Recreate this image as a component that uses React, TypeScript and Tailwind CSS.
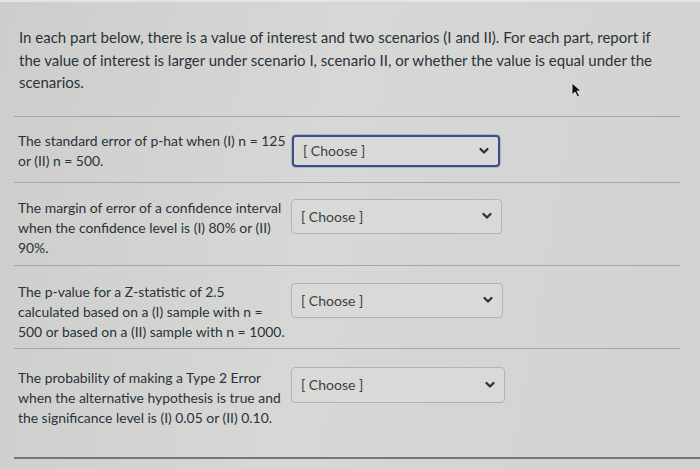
import React from "react";

type Part = {
  id: number;
  lines: string[];
  rowClass: string;
  selectClass: string;
  focused?: boolean;
};

const parts: Part[] = [
  {
    id: 1,
    lines: ["The standard error of p-hat when (I) n = 125", "or (II) n = 500."],
    rowClass: "pt-[14px] pb-[11px]",
    selectClass: "mt-[4px] h-[32px] w-[208px] ml-[1px]",
    focused: true,
  },
  {
    id: 2,
    lines: ["The margin of error of a confidence interval", "when the confidence level is (I) 80% or (II)", "90%."],
    rowClass: "pt-[15px] pb-[7px]",
    selectClass: "mt-[1px] h-[35px] w-[211px]",
  },
  {
    id: 3,
    lines: ["The p-value for a Z-statistic of 2.5", "calculated based on a (I) sample with n =", "500 or based on a (II) sample with n = 1000."],
    rowClass: "pt-[16px] pb-[6px]",
    selectClass: "mt-[1px] h-[35px] w-[212px]",
  },
  {
    id: 4,
    lines: [
      "The probability of making a Type 2 Error",
      "when the alternative hypothesis is true and",
      "the significance level is (I) 0.05 or (II) 0.10.",
    ],
    rowClass: "pt-[19px] pb-[29px]",
    selectClass: "mt-[-1px] h-[36px] w-[214px]",
  },
];

function Chevron() {
  return (
    <svg width="10" height="8" viewBox="0 0 10 8" className="text-[#2a2f35]">
      <path d="M1.5 2 L5 5.5 L8.5 2" fill="none" stroke="currentColor" strokeWidth="2.2" strokeLinecap="round" strokeLinejoin="round" />
    </svg>
  );
}

function ChooseSelect({ className, focused }: { className: string; focused?: boolean }) {
  return (
    <div
      className={`${className} flex items-center justify-between rounded-[4px] pl-[9px] pr-[9px] ${
        focused
          ? "border-2 border-[#3f4d86] shadow-[0_0_0_1px_rgba(120,135,190,0.45)] bg-[#d9dad8]"
          : "border border-[#b3b4b1] bg-[#d9dad7]"
      }`}
    >
      <span className="text-[14px] text-[#3a4047]">[ Choose ]</span>
      <Chevron />
    </div>
  );
}

function Cursor() {
  return (
    <svg width="12" height="16" viewBox="0 0 12 16" className="absolute left-[571px] top-[82px]">
      <path d="M1 1 L1 13 L4 10 L6.5 15 L8.5 14 L6 9 L10 9 Z" fill="#111" stroke="#f2f2f2" strokeWidth="0.8" />
    </svg>
  );
}

export default function App() {
  return (
    <div
      className="relative h-[469px] w-[700px] overflow-hidden bg-[linear-gradient(100deg,#cdcecb_0%,#d7d8d5_45%,#d2d3d0_100%)] text-[#29323a]"
      style={{ fontFamily: "Lato, 'Open Sans', sans-serif" }}
    >
      <div className="h-[2px] bg-[#e4e5e2]" />
      <div className="ml-[14px] mr-[20px]">
        <p className="pl-[5px] pt-[24px] pb-[22px] text-[15px] leading-[22.5px]">
          In each part below, there is a value of interest and two scenarios (I and II). For each part, report if
          <br />
          the value of interest is larger under scenario I, scenario II, or whether the value is equal under the
          <br />
          scenarios.
        </p>
        {parts.map((p) => (
          <div key={p.id} className={`flex items-start border-t border-[#a5a6a3] pl-[4px] ${p.rowClass}`}>
            <p className="w-[273px] text-[13.9px] leading-[20px] whitespace-nowrap">
              {p.lines.map((l, i) => (
                <span key={i} className="block">
                  {l}
                </span>
              ))}
            </p>
            <ChooseSelect className={p.selectClass} focused={p.focused} />
          </div>
        ))}
        <div className="border-t-2 border-[#767774] h-[12px] mr-[-20px]" />
      </div>
      <Cursor />
    </div>
  );
}
